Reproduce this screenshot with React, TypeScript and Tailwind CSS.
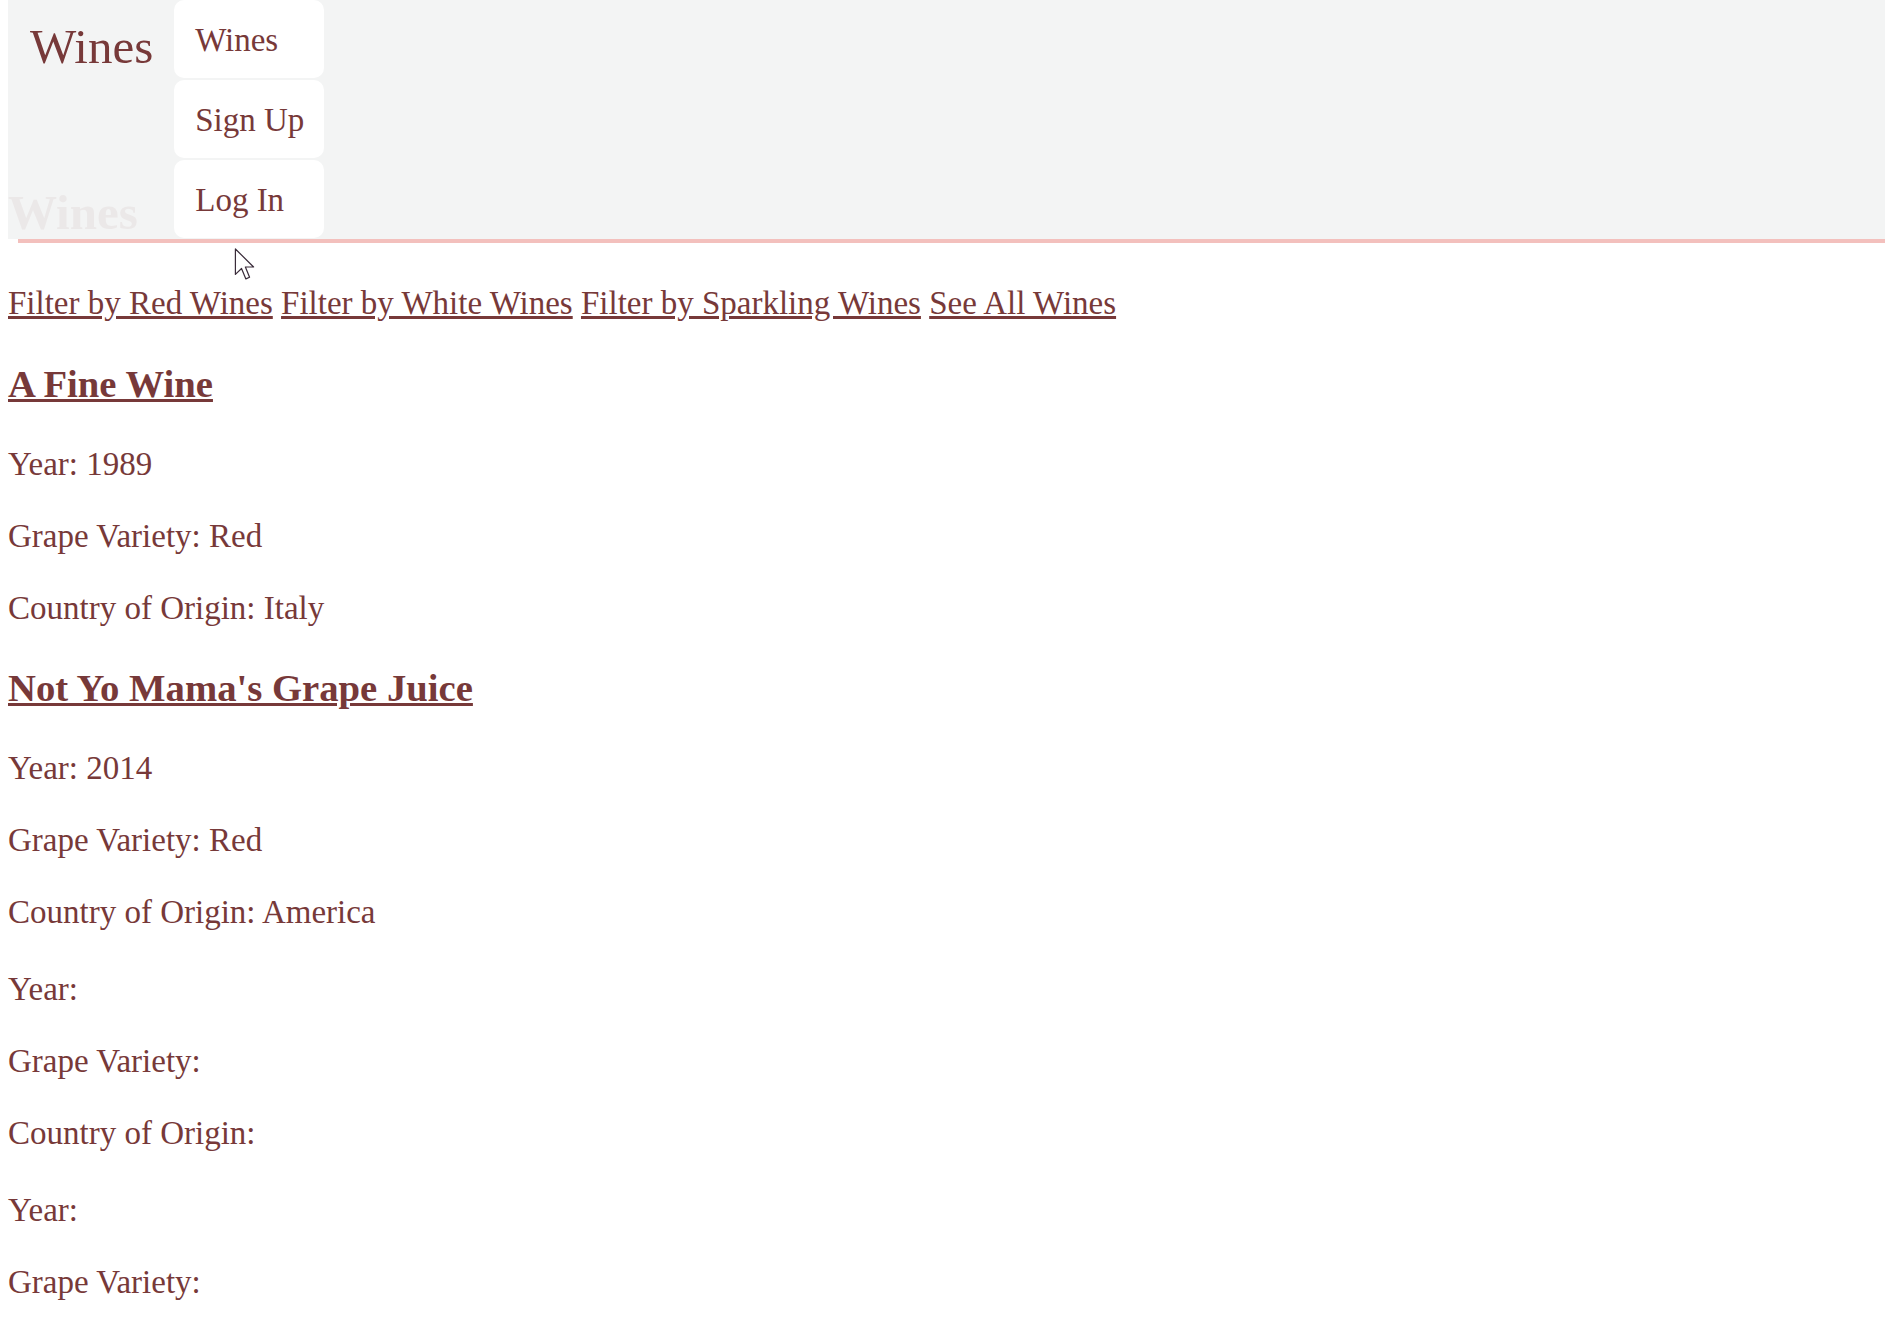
import React from 'react';

type Wine = {
  name: string;
  year: string;
  grape: string;
  country: string;
};

const wines: Wine[] = [
  { name: 'A Fine Wine', year: '1989', grape: 'Red', country: 'Italy' },
  { name: "Not Yo Mama's Grape Juice", year: '2014', grape: 'Red', country: 'America' },
  { name: '', year: '', grape: '', country: '' },
  { name: '', year: '', grape: '', country: '' },
];

const filters = ['Filter by Red Wines', 'Filter by White Wines', 'Filter by Sparkling Wines', 'See All Wines'];

const navItems = ['Wines', 'Sign Up', 'Log In'];

const Cursor: React.FC = () => (
  <svg
    className="absolute left-[234px] top-[248px] pointer-events-none"
    width="21"
    height="33"
    viewBox="0 0 12.5 20.5"
  >
    <path
      d="M0.6 0.6 L0.6 16.4 L4.4 12.7 L7.1 19.2 L9.4 18.2 L6.8 11.8 L11.9 11.8 Z"
      fill="#ffffff"
      stroke="#3a2c3a"
      strokeWidth="0.75"
      strokeLinejoin="round"
    />
  </svg>
);

const App: React.FC = () => {
  return (
    <div className="relative min-h-screen bg-white text-[#773939] font-['Liberation_Serif','Times_New_Roman',serif]">
      {/* HEADER */}
      <header className="relative ml-2 h-[239px] bg-[#f3f4f4] flex">
        {/* page title sitting under the bar */}
        <h1 className="absolute left-0 top-[188px] text-[49px] leading-none font-bold text-[#ebe8e8]">Wines</h1>

        <div className="relative pl-[22px] pt-[22px] text-[49px] leading-none">Wines</div>

        <nav className="relative ml-[21px] flex flex-col gap-[2px]">
          {navItems.map(item => (
            <a
              key={item}
              href="#"
              className="w-[150px] h-[78px] flex items-center pl-[21px] pt-[3px] bg-white rounded-[10px] text-[33px]"
            >
              {item}
            </a>
          ))}
        </nav>
      </header>

      <div className="ml-[18px] h-[4px] bg-[#f3c0bd]" />

      {/* CONTENT */}
      <main className="pl-2 pt-[40px]">
        <div className="text-[33px] leading-[40px] whitespace-nowrap">
          {filters.map((f, i) => (
            <React.Fragment key={f}>
              <a href="#" className="underline">{f}</a>
              {i < filters.length - 1 && ' '}
            </React.Fragment>
          ))}
        </div>

        <div className="mt-[38px] flex flex-col gap-[37px]">
          {wines.map((wine, i) => (
            <div key={i} className="flex flex-col">
              {wine.name && (
                <h2 className="mb-[37px] text-[38.7px] leading-[46px] font-bold">
                  <a href="#" className="underline">{wine.name}</a>
                </h2>
              )}
              <div className="flex flex-col gap-[32px] text-[33px] leading-[40px]">
                <p>Year: {wine.year}</p>
                <p>Grape Variety: {wine.grape}</p>
                <p>Country of Origin: {wine.country}</p>
              </div>
            </div>
          ))}
        </div>
      </main>

      <Cursor />
    </div>
  );
};

export default App;
